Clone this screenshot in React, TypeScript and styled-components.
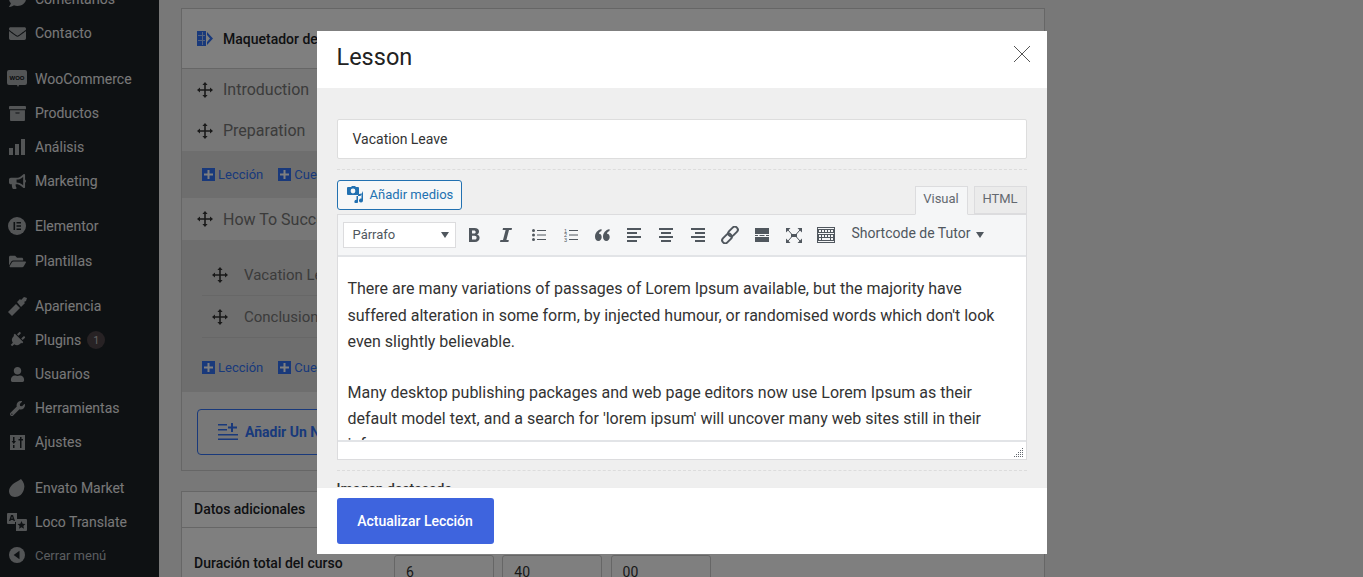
import { FC, ReactNode } from "react";
import styled, { createGlobalStyle } from "styled-components";
import {
  FaArchive,
  FaBullhorn,
  FaComment,
  FaEnvelope,
  FaFolderOpen,
  FaPlug,
  FaUser,
  FaWrench,
} from "react-icons/fa";

const GlobalStyle = createGlobalStyle`
  html, body {
    margin: 0;
    height: 100%;
    overflow: hidden;
    background: #f1f1f1;
    font-family: Roboto, "Liberation Sans", sans-serif;
  }
  * { box-sizing: border-box; }
`;

const Page = styled.div`
  display: flex;
  height: 577px;
  overflow: hidden;
`;

/* ---------- admin menu ---------- */
const Sidebar = styled.nav`
  width: 159px;
  flex-shrink: 0;
  background: #1d2327;
  overflow: hidden;
`;
const MenuList = styled.div`
  margin-top: -18px;
  display: flex;
  flex-direction: column;
`;
const MenuItem = styled.div<{ $gap?: number; $small?: boolean }>`
  height: 34px;
  margin-top: ${({ $gap }) => $gap || 0}px;
  padding-left: 7px;
  display: flex;
  align-items: center;
  gap: 8px;
  color: ${({ $small }) => ($small ? "#b4b9be" : "#f0f0f1")};
  font-size: ${({ $small }) => ($small ? "13px" : "14px")};
  white-space: nowrap;
`;
const MenuIcon = styled.span`
  width: 20px;
  height: 20px;
  display: flex;
  align-items: center;
  justify-content: center;
  color: #a7aaad;
  flex-shrink: 0;
`;
const PlugTilt = styled.span`
  display: flex;
  transform: rotate(45deg);
`;
const Badge = styled.span`
  width: 18px;
  height: 18px;
  margin-left: -2px;
  border-radius: 50%;
  background: #4e4448;
  color: #c8c8c8;
  font-size: 10px;
  display: flex;
  align-items: center;
  justify-content: center;
`;
const WooText = styled.text`
  font-size: 6px;
  font-weight: 700;
  font-family: "Liberation Sans", sans-serif;
`;

/* ---------- page behind the modal ---------- */
const Main = styled.main`
  width: 864px;
  margin-left: 22px;
  padding-top: 8px;
  flex-shrink: 0;
`;
const Card = styled.section<{ $top?: number }>`
  background: #f1f1f1;
  border: 1px solid #ccc;
  margin-top: ${({ $top }) => $top || 0}px;
`;
const BuilderHead = styled.header`
  height: 60px;
  background: #fff;
  border-bottom: 1px solid #ccc;
  padding-left: 15px;
  display: flex;
  align-items: center;
  gap: 10px;
  font-size: 14px;
  font-weight: 500;
  color: #1d2327;
`;
const TopicRow = styled.div<{ $tall?: boolean }>`
  height: ${({ $tall }) => ($tall ? 42 : 41)}px;
  padding-left: 15px;
  display: flex;
  align-items: center;
  gap: 10px;
  font-size: 16px;
  color: #777;
  background: #eee;
`;
const TopicBody = styled.div<{ $top: number; $bottom: number }>`
  background: #dcdcdc;
  padding: ${({ $top }) => $top}px 20px ${({ $bottom }) => $bottom}px;
  display: flex;
  flex-direction: column;
`;
const LessonRow = styled.div`
  height: 42px;
  display: flex;
  align-items: center;
  gap: 16px;
  padding-left: 10px;
  font-size: 15px;
  color: #777;
  border-bottom: 1px solid #cfcfcf;
`;
const AddRow = styled.div<{ $top?: number }>`
  height: 46px;
  margin-top: ${({ $top }) => $top || 0}px;
  display: flex;
  align-items: center;
  gap: 15px;
  color: #3273f6;
  font-size: 13px;
`;
const AddLink = styled.span`
  display: flex;
  align-items: center;
  gap: 3px;
`;
const PlusBox = styled.span`
  width: 13px;
  height: 13px;
  background: #3273f6;
  display: flex;
  align-items: center;
  justify-content: center;
`;
const BuilderFoot = styled.div`
  height: 78px;
  padding: 17px 15px;
  background: #f1f1f1;
`;
const AddTopic = styled.div`
  width: 300px;
  height: 46px;
  border: 1px solid #3273f6;
  border-radius: 4px;
  padding-left: 20px;
  display: flex;
  align-items: center;
  gap: 7px;
  color: #3273f6;
  font-size: 14px;
  font-weight: 700;
  white-space: nowrap;
`;
const CardTitle = styled.header`
  height: 36px;
  padding: 0 0 2px 12px;
  background: #fff;
  border-bottom: 1px solid #ccc;
  display: flex;
  align-items: center;
  font-size: 14px;
  font-weight: 500;
  color: #1d2327;
`;
const FieldRow = styled.div`
  background: #fff;
  padding: 27px 12px 0;
  display: flex;
  gap: 8.3px;
`;
const FieldLabel = styled.span`
  width: 191.7px;
  font-size: 14px;
  font-weight: 500;
  color: #1d2327;
`;
const NumberBox = styled.div`
  width: 100px;
  height: 40px;
  padding: 8px 11px;
  background: #fff;
  border: 1px solid #ccc;
  border-radius: 3px;
  font-size: 14px;
  color: #333;
`;

/* ---------- modal ---------- */
const Overlay = styled.div`
  position: fixed;
  inset: 0;
  background: rgba(0, 0, 0, 0.5);
  padding-top: 31px;
  display: flex;
  justify-content: center;
`;
const Modal = styled.div`
  width: 730px;
  height: 523px;
  background: #fff;
  display: flex;
  flex-direction: column;
`;
const ModalHead = styled.header`
  height: 57px;
  flex-shrink: 0;
  padding: 0 17px 6px 20px;
  display: flex;
  align-items: center;
  justify-content: space-between;
`;
const ModalTitle = styled.h2`
  margin: 0;
  font-size: 23.5px;
  font-weight: 400;
  color: #222;
`;
const CloseIcon = styled.svg`
  display: block;
  margin-top: -5px;
`;
const ModalBody = styled.div`
  flex: 1;
  min-height: 0;
  overflow: hidden;
  background: #efefef;
  padding: 31px 20px 0;
`;
const TitleInput = styled.div`
  height: 40px;
  background: #fff;
  border: 1px solid #ddd;
  border-radius: 2px;
  padding-left: 15px;
  display: flex;
  align-items: center;
  font-size: 14px;
  color: #333;
`;
const Dashed = styled.div<{ $top: number }>`
  margin-top: ${({ $top }) => $top}px;
  border-top: 1px dashed #dcdcdc;
`;
const EditorTop = styled.div`
  margin-top: 10px;
  height: 34px;
  display: flex;
  align-items: flex-start;
  justify-content: space-between;
`;
const MediaButton = styled.div`
  width: 125px;
  height: 30px;
  border: 1px solid #2271b1;
  border-radius: 3px;
  background: #f6f7f7;
  color: #2271b1;
  font-size: 13px;
  padding: 0 0 2px 9px;
  display: flex;
  align-items: center;
  gap: 6px;
`;
const Tabs = styled.div`
  display: flex;
  align-items: flex-end;
  gap: 6px;
  align-self: flex-end;
`;
const Tab = styled.div<{ $active?: boolean }>`
  height: ${({ $active }) => ($active ? 29 : 28)}px;
  width: 53px;
  padding-bottom: ${({ $active }) => ($active ? 4 : 3)}px;
  margin-bottom: ${({ $active }) => ($active ? -1 : 0)}px;
  background: ${({ $active }) => ($active ? "#f5f6f7" : "#ebebeb")};
  border: 1px solid #dcdcde;
  border-bottom-color: ${({ $active }) => ($active ? "#f5f6f7" : "#dcdcde")};
  color: #646970;
  font-size: 13px;
  display: flex;
  align-items: center;
  justify-content: center;
  position: relative;
`;
const EditorFrame = styled.div`
  border: 1px solid #dcdcde;
  background: #fff;
  height: 246px;
  display: flex;
  flex-direction: column;
`;
const Toolbar = styled.div`
  height: 42px;
  flex-shrink: 0;
  background: #f5f6f7;
  border-bottom: 2px solid #e2e4e7;
  padding-left: 5px;
  display: flex;
  align-items: center;
`;
const FormatSelect = styled.div`
  width: 113px;
  height: 26px;
  background: #fff;
  border: 1px solid #dcdcde;
  padding: 0 6px 1px 9px;
  margin-right: 2px;
  display: flex;
  align-items: center;
  justify-content: space-between;
  font-size: 13px;
  color: #50575e;
`;
const Caret = styled.span<{ $left?: number; $drop?: number }>`
  width: 0;
  height: 0;
  margin-left: ${({ $left }) => $left || 0}px;
  margin-top: ${({ $drop }) => $drop || 0}px;
  border-left: 4px solid transparent;
  border-right: 4px solid transparent;
  border-top: 6px solid #50575e;
`;
const ToolButton = styled.span<{ $nudge?: boolean }>`
  width: 32px;
  height: 26px;
  flex-shrink: 0;
  padding-left: ${({ $nudge }) => ($nudge ? 2 : 0)}px;
  display: flex;
  align-items: center;
  justify-content: center;
  color: #50575e;
`;
const ShortcodeMenu = styled.span`
  margin-left: 10px;
  margin-top: -4px;
  display: flex;
  align-items: center;
  font-size: 14px;
  color: #50575e;
`;
const EditorText = styled.div`
  flex: 1;
  min-height: 0;
  overflow: hidden;
  padding: 19.3px 10px 0;
  font-size: 16px;
  line-height: 26.4px;
  color: #333;
  p {
    margin: 0 0 24.1px;
  }
`;
const StatusBar = styled.div`
  height: 19px;
  flex-shrink: 0;
  border-top: 2px solid #e2e4e7;
  display: flex;
  justify-content: flex-end;
  align-items: flex-end;
  padding: 0 3px 2px 0;
`;
const FieldHeading = styled.div`
  margin-top: 10px;
  font-size: 14px;
  font-weight: 500;
  color: #333;
`;
const ModalFoot = styled.footer`
  height: 67px;
  flex-shrink: 0;
  padding: 10px 20px 0;
  border-top: 1px solid #eee;
  background: #fff;
`;
const SaveButton = styled.div`
  width: 157px;
  height: 46px;
  background: #3e64de;
  border-radius: 3px;
  color: #fff;
  font-size: 14px;
  font-weight: 500;
  display: flex;
  align-items: center;
  justify-content: center;
`;

/* ---------- drawings ---------- */
const MoveIcon = () => (
  <svg width="16" height="16" viewBox="0 0 16 16" fill="#333">
    <path d="M8 0l2.6 3H8.8v4.2H13V5.4L16 8l-3 2.6V8.8H8.8V13h1.8L8 16l-2.600-3h1.800V8.800H3v1.800L0 8l3-2.600v1.800h4.200V3H5.400z" />
  </svg>
);

const Plus = () => (
  <svg width="9" height="9" viewBox="0 0 9 9" fill="#fff">
    <path d="M3.500 0h2v3.500H9v2H5.500V9h-2V5.500H0v-2h3.500z" />
  </svg>
);

const BuilderIcon = () => (
  <svg width="16" height="15" viewBox="0 0 16 15" fill="#3273f6">
    <path d="M0 0h9v15H0zM10 1l6 6.500-6 6.500v-3l3-3.500-3-3.500z" />
    <path fill="#fff" d="M1 4h7v1H1zM1 9h7v1H1zM5 1h1v13H5z" opacity=".6" />
  </svg>
);

const AddTopicIcon = () => (
  <svg width="20" height="18" viewBox="0 0 20 18" fill="currentColor">
    <path d="M0 1h9v1.500H0zM0 6h9v1.500H0zM0 11h20v1.500H0zM0 15.500h20V17H0zM13 3.500V0h2v3.500h4v2h-4V9h-2V5.500H10v-2z" />
  </svg>
);

const AnalyticsIcon = () => (
  <svg width="16" height="16" viewBox="0 0 16 16" fill="currentColor">
    <path d="M0 9h4v7H0zM6 5h4v11H6zM12 0h4v16h-4z" />
  </svg>
);
const WooIcon = () => (
  <svg width="20" height="20" viewBox="0 0 20 20">
    <path fill="currentColor" d="M2 1h16a2 2 0 0 1 2 2v11a2 2 0 0 1-2 2h-6l-1 2-1-2H2a2 2 0 0 1-2-2V3a2 2 0 0 1 2-2z" />
    <WooText x="10" y="11" textAnchor="middle" fill="#0e1114">WOO</WooText>
  </svg>
);
const ElementorIcon = () => (
  <svg width="18" height="18" viewBox="0 0 18 18">
    <circle cx="9" cy="9" r="9" fill="currentColor" />
    <path fill="#1d2327" d="M5.500 5h1.600v8H5.500zM8.500 5H13v1.600H8.500zM8.500 8.200H13v1.600H8.500zM8.500 11.400H13V13H8.500z" />
  </svg>
);
const BrushIcon = () => (
  <svg width="19" height="19" viewBox="0 0 19 19" fill="currentColor">
    <path d="M0 15l8-8 4 4-8 8zM9 5l3-3 1 1 3-3 3 1-1 3-2 1 1 1-3 3-1 1z" />
  </svg>
);
const SlidersIcon = () => (
  <svg width="15" height="15" viewBox="0 0 15 15">
    <path fill="currentColor" d="M0 0h15v15H0z" />
    <path fill="#1d2327" d="M3 2h1.500v4H6L3.800 9 1.600 6H3zM3 10h1.500v3H3zM10 2h1.500v2H13v1.500h-1.500V13H10V5.500H8.500V4H10z" />
  </svg>
);
const LeafIcon = () => (
  <svg width="16" height="18" viewBox="0 0 16 18" fill="currentColor">
    <path d="M12 0c3 3 4 7 3 10-1 5-5 8-9 8-4 0-6-3-6-6 0-3 2-5 4-7 2-2 6-3 8-5z" />
  </svg>
);
const TranslateIcon = () => (
  <svg width="20" height="18" viewBox="0 0 20 18">
    <path fill="currentColor" d="M1 0h9v9H8v2H1a1 1 0 0 1-1-1V1a1 1 0 0 1 1-1z" />
    <path fill="#1d2327" d="M4 2h2l2 6H6.600l-.3-1H3.700l-.3 1H2zM4.200 5.600h1.600L5 3.400z" />
    <path fill="currentColor" d="M9 6h10a1 1 0 0 1 1 1v10a1 1 0 0 1-1 1H9z" />
    <path fill="#1d2327" d="M14.500 8l1.200 2.700 2.800.3-2.100 1.900.6 2.800-2.500-1.500-2.500 1.500.6-2.800-2.100-1.900 2.800-.3z" />
  </svg>
);
const CollapseIcon = () => (
  <svg width="16" height="16" viewBox="0 0 16 16">
    <circle cx="8" cy="8" r="8" fill="currentColor" />
    <path fill="#1d2327" d="M10.500 3.800v8.400L4.600 8z" />
  </svg>
);

const MediaIcon = () => (
  <svg width="17" height="17" viewBox="0 0 17 17" fill="#2271b1">
    <path d="M1 1h3l1-1h3l1 1h2a1 1 0 0 1 1 1v6a1 1 0 0 1-1 1H1a1 1 0 0 1-1-1V2a1 1 0 0 1 1-1zm5 1.600a2.400 2.400 0 1 0 0 4.800 2.400 2.400 0 0 0 0-4.800z" />
    <path d="M16 5v9.500a2 2 0 1 1-1.500-1.900V7.500L11 8.300v7.200a1.800 1.800 0 1 1-1.500-1.700V10h4z" />
  </svg>
);

const BoldIcon = () => (
  <svg width="12" height="14" viewBox="0 0 12 14" fill="currentColor">
    <path d="M1 0h5.500C9.500 0 11 1.300 11 3.400c0 1.400-.8 2.600-2 3 1.600.4 2.600 1.600 2.600 3.400 0 2.600-1.800 4.200-4.600 4.200H1zm3 2.400v3.200h2c1 0 1.700-.6 1.700-1.600s-.7-1.600-1.700-1.600zm0 5.400v3.800h2.600c1.200 0 2-.7 2-1.900s-.8-1.900-2-1.900z" />
  </svg>
);
const ItalicIcon = () => (
  <svg width="12" height="14" viewBox="0 0 12 14" fill="currentColor">
    <path d="M3 0h9l-.4 2H9L6.400 12h2.400L8.400 14H0l.4-2H3L5.600 2H2.600z" />
  </svg>
);
const BulletIcon = () => (
  <svg width="14" height="12" viewBox="0 0 14 12" fill="currentColor">
    <circle cx="1.500" cy="1.500" r="1.500" />
    <circle cx="1.500" cy="6" r="1.500" />
    <circle cx="1.500" cy="10.500" r="1.500" />
    <path d="M5 1h9v1H5zM5 5.500h9v1H5zM5 10h9v1H5z" />
  </svg>
);
const NumberText = styled.text`
  font-size: 5.5px;
  font-family: "Liberation Sans", sans-serif;
`;
const NumberIcon = () => (
  <svg width="14" height="14" viewBox="0 0 14 14" fill="currentColor">
    <NumberText x="0" y="4.500">1</NumberText>
    <NumberText x="0" y="9">2</NumberText>
    <NumberText x="0" y="13.500">3</NumberText>
    <path d="M5 2h9v1H5zM5 6.500h9v1H5zM5 11h9v1H5z" />
  </svg>
);
const QuoteIcon = () => (
  <svg width="15" height="12" viewBox="0 0 15 12" fill="currentColor">
    <path d="M6.500 0v2C5 2.600 4.200 3.500 4 4.700c1.500 0 2.700 1.200 2.700 3.300S5.300 12 3.400 12C1.300 12 0 10.200 0 7.800 0 4 2.500 1 6.500 0zM14.500 0v2c-1.500.6-2.300 1.500-2.500 2.700 1.500 0 2.700 1.200 2.700 3.300s-1.400 4-3.300 4C9.300 12 8 10.200 8 7.800 8 4 10.500 1 14.500 0z" />
  </svg>
);
const AlignIcon: FC<{ mode: "left" | "center" | "right" }> = ({ mode }) => {
  const x = mode === "left" ? 0 : mode === "center" ? 2 : 4;
  return (
    <svg width="14" height="14" viewBox="0 0 14 14" fill="currentColor">
      <rect x="0" y="0" width="14" height="2" />
      <rect x={x} y="4" width="10" height="2" />
      <rect x="0" y="8" width="14" height="2" />
      <rect x={x} y="12" width="10" height="2" />
    </svg>
  );
};
const LinkIcon = () => (
  <svg width="18" height="18" viewBox="0 0 18 18" fill="none" stroke="currentColor" strokeWidth="2">
    <rect x="9" y="0" width="6" height="11" rx="3" transform="rotate(45 12 5.500)" />
    <rect x="3" y="7" width="6" height="11" rx="3" transform="rotate(45 6 12.500)" />
  </svg>
);
const MoreIcon = () => (
  <svg width="14" height="14" viewBox="0 0 14 14" fill="currentColor">
    <path d="M0 0h14v6H0zM0 7h3v1H0zM4.500 7h5v1h-5zM11 7h3v1h-3zM0 9h14v5H0z" />
  </svg>
);
const FullscreenIcon = () => (
  <svg width="16" height="15" viewBox="0 0 16 15" fill="currentColor">
    <path d="M5 6h6v3H5z" />
    <path d="M0 0h4.500L0 4.500zM16 0v4.500L11.500 0zM0 15v-4.500L4.500 15zM16 15h-4.500L16 10.500z" />
    <path stroke="currentColor" strokeWidth="1" d="M2 2l4 4.500M14 2l-4 4.500M2 13l4-4.500M14 13l-4-4.500" />
  </svg>
);
const KeyboardIcon = () => (
  <svg width="18" height="16" viewBox="0 0 18 16">
    <path fill="currentColor" d="M0 0h18v16H0z" />
    <path fill="#f5f6f7" d="M1 1h16v1H1zM1 6h16v1H1zM1 14h16v1H1z" />
    <path fill="#f5f6f7" d="M2 3h2v2H2zM5 3h2v2H5zM8 3h2v2H8zM11 3h2v2h-2zM14 3h2v2h-2zM2 8h2v2H2zM5 8h2v2H5zM8 8h2v2H8zM11 8h2v2h-2zM14 8h2v2h-2zM2 11h2v2H2zM5 11h8v2H5zM14 11h2v2h-2z" />
  </svg>
);
const GripIcon = () => (
  <svg width="9" height="9" viewBox="0 0 9 9" fill="#646970">
    <path d="M8 0h1v1H8zM6 2h1v1H6zM8 2h1v1H8zM4 4h1v1H4zM6 4h1v1H6zM8 4h1v1H8zM2 6h1v1H2zM4 6h1v1H4zM6 6h1v1H6zM8 6h1v1H8zM0 8h1v1H0zM2 8h1v1H2zM4 8h1v1H4zM6 8h1v1H6zM8 8h1v1H8z" />
  </svg>
);

const menuGroups: { label: string; icon: ReactNode; gap?: number; badge?: string; small?: boolean }[] = [
  { label: "Comentarios", icon: <FaComment size={17} /> },
  { label: "Contacto", icon: <FaEnvelope size={17} /> },
  { label: "WooCommerce", icon: <WooIcon />, gap: 12 },
  { label: "Productos", icon: <FaArchive size={17} /> },
  { label: "Análisis", icon: <AnalyticsIcon /> },
  { label: "Marketing", icon: <FaBullhorn size={17} /> },
  { label: "Elementor", icon: <ElementorIcon />, gap: 11 },
  { label: "Plantillas", icon: <FaFolderOpen size={17} />, gap: 1 },
  { label: "Apariencia", icon: <BrushIcon />, gap: 11 },
  { label: "Plugins", icon: <PlugTilt><FaPlug size={16} /></PlugTilt>, badge: "1" },
  { label: "Usuarios", icon: <FaUser size={15} /> },
  { label: "Herramientas", icon: <FaWrench size={15} /> },
  { label: "Ajustes", icon: <SlidersIcon /> },
  { label: "Envato Market", icon: <LeafIcon />, gap: 12 },
  { label: "Loco Translate", icon: <TranslateIcon /> },
  { label: "Cerrar menú", icon: <CollapseIcon />, small: true, gap: -1 },
];

const AddLinks: FC<{ top?: number }> = ({ top }) => (
  <AddRow $top={top}>
    <AddLink>
      <PlusBox>
        <Plus />
      </PlusBox>
      Lección
    </AddLink>
    <AddLink>
      <PlusBox>
        <Plus />
      </PlusBox>
      Cuestionario
    </AddLink>
  </AddRow>
);

const App: FC = () => {
  return (
    <>
      <GlobalStyle />
      <Page>
        <Sidebar>
          <MenuList>
            {menuGroups.map((item) => (
              <MenuItem key={item.label} $gap={item.gap} $small={item.small}>
                <MenuIcon>{item.icon}</MenuIcon>
                {item.label}
                {item.badge && <Badge>{item.badge}</Badge>}
              </MenuItem>
            ))}
          </MenuList>
        </Sidebar>
        <Main>
          <Card>
            <BuilderHead>
              <BuilderIcon />
              Maquetador de cursos
            </BuilderHead>
            <TopicRow>
              <MoveIcon />
              Introduction
            </TopicRow>
            <TopicRow>
              <MoveIcon />
              Preparation
            </TopicRow>
            <TopicBody $top={0} $bottom={1}>
              <AddLinks />
            </TopicBody>
            <TopicRow $tall>
              <MoveIcon />
              How To Succeed
            </TopicRow>
            <TopicBody $top={14} $bottom={2}>
              <LessonRow>
                <MoveIcon />
                Vacation Leave
              </LessonRow>
              <LessonRow>
                <MoveIcon />
                Conclusion
              </LessonRow>
              <AddLinks top={6} />
            </TopicBody>
            <BuilderFoot>
              <AddTopic>
                <AddTopicIcon />
                Añadir Un Nuevo Tema
              </AddTopic>
            </BuilderFoot>
          </Card>
          <Card $top={20}>
            <CardTitle>Datos adicionales</CardTitle>
            <FieldRow>
              <FieldLabel>Duración total del curso</FieldLabel>
              <NumberBox>6</NumberBox>
              <NumberBox>40</NumberBox>
              <NumberBox>00</NumberBox>
            </FieldRow>
          </Card>
        </Main>
      </Page>
      <Overlay>
        <Modal>
          <ModalHead>
            <ModalTitle>Lesson</ModalTitle>
            <CloseIcon width="16" height="16" viewBox="0 0 16 16" fill="none" stroke="#555" strokeWidth="1">
              <path d="M0 0l16 16M16 0L0 16" />
            </CloseIcon>
          </ModalHead>
          <ModalBody>
            <TitleInput>Vacation Leave</TitleInput>
            <Dashed $top={10} />
            <EditorTop>
              <MediaButton>
                <MediaIcon />
                Añadir medios
              </MediaButton>
              <Tabs>
                <Tab $active>Visual</Tab>
                <Tab>HTML</Tab>
              </Tabs>
            </EditorTop>
            <EditorFrame>
              <Toolbar>
                <FormatSelect>
                  Párrafo
                  <Caret />
                </FormatSelect>
                <ToolButton><BoldIcon /></ToolButton>
                <ToolButton><ItalicIcon /></ToolButton>
                <ToolButton $nudge><BulletIcon /></ToolButton>
                <ToolButton $nudge><NumberIcon /></ToolButton>
                <ToolButton $nudge><QuoteIcon /></ToolButton>
                <ToolButton><AlignIcon mode="left" /></ToolButton>
                <ToolButton><AlignIcon mode="center" /></ToolButton>
                <ToolButton><AlignIcon mode="right" /></ToolButton>
                <ToolButton><LinkIcon /></ToolButton>
                <ToolButton><MoreIcon /></ToolButton>
                <ToolButton><FullscreenIcon /></ToolButton>
                <ToolButton><KeyboardIcon /></ToolButton>
                <ShortcodeMenu>
                  Shortcode de Tutor
                  <Caret $left={6} $drop={4} />
                </ShortcodeMenu>
              </Toolbar>
              <EditorText>
                <p>
                  There are many variations of passages of Lorem Ipsum available, but the majority have suffered
                  alteration in some form, by injected humour, or randomised words which don't look even slightly
                  believable.
                </p>
                <p>
                  Many desktop publishing packages and web page editors now use Lorem Ipsum as their default model
                  text, and a search for 'lorem ipsum' will uncover many web sites still in their infancy.
                </p>
              </EditorText>
              <StatusBar>
                <GripIcon />
              </StatusBar>
            </EditorFrame>
            <Dashed $top={10} />
            <FieldHeading>Imagen destacada</FieldHeading>
          </ModalBody>
          <ModalFoot>
            <SaveButton>Actualizar Lección</SaveButton>
          </ModalFoot>
        </Modal>
      </Overlay>
    </>
  );
};

export default App;
